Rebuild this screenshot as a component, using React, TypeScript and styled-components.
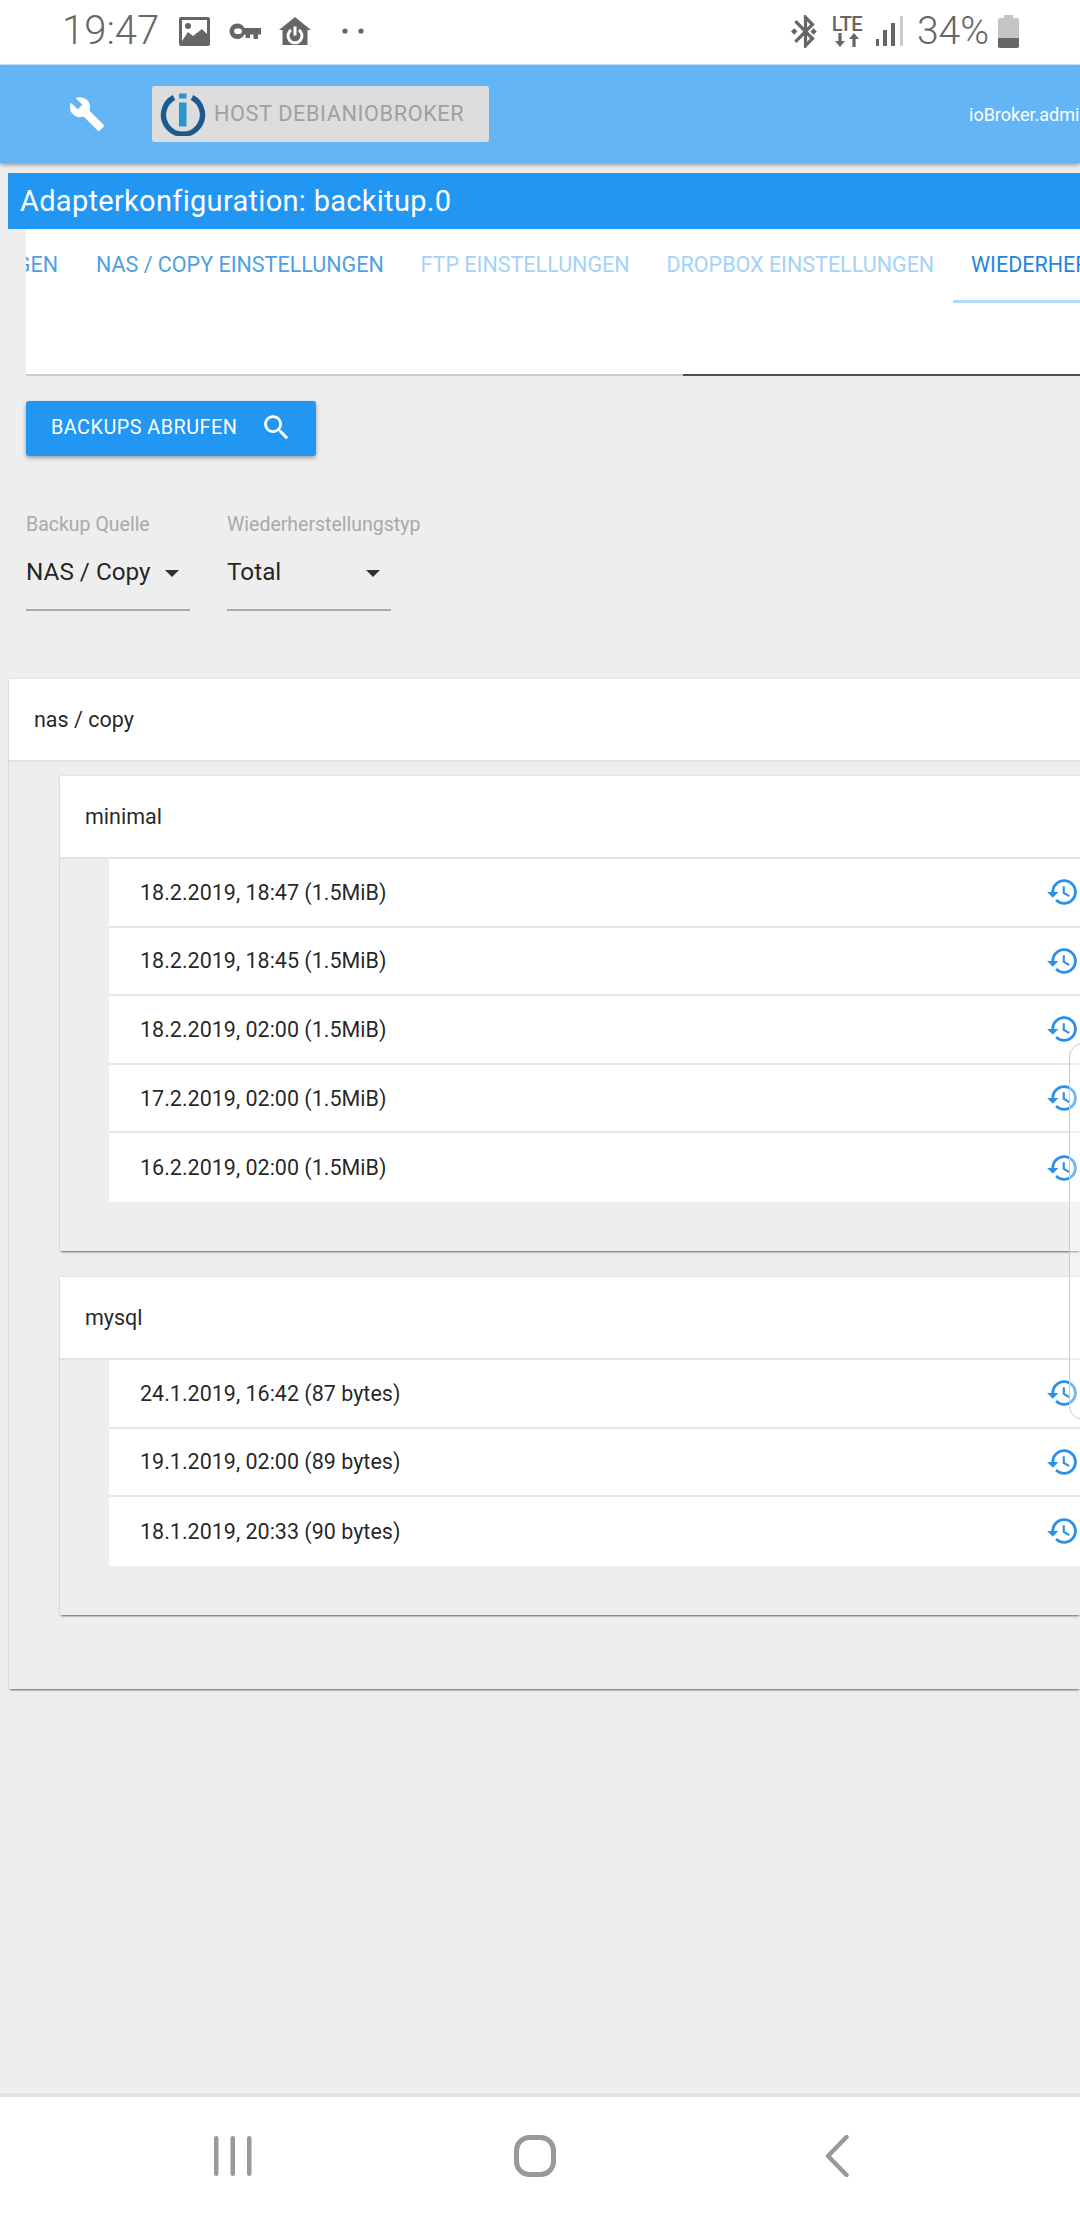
import styled, { createGlobalStyle } from 'styled-components'

const GlobalStyle = createGlobalStyle`
  html, body {
    margin: 0;
    padding: 0;
    background: #eeeeee;
    font-family: Roboto, "Liberation Sans", sans-serif;
  }
  * {
    box-sizing: border-box;
  }
`

const Screen = styled.div`
  position: relative;
  width: 1080px;
  height: 2220px;
  display: flex;
  flex-direction: column;
  overflow: hidden;
  background: #eeeeee;
`

/* status bar */
const StatusBar = styled.div`
  height: 65px;
  flex: none;
  display: flex;
  align-items: center;
  justify-content: space-between;
  padding: 0 61px 2px 62px;
  background: #fff;
  border-bottom: 1px solid #cfe6fb;
  color: #666;
`

const StatusGroup = styled.div`
  display: flex;
  align-items: center;
`

const StatusText = styled.span<{ $left?: number; $size: number }>`
  font-size: ${(p) => p.$size}px;
  font-weight: 300;
  line-height: 44px;
  margin-left: ${(p) => p.$left ?? 0}px;
`

const StatusIcon = styled.svg<{ $left: number }>`
  display: block;
  flex: none;
  margin-left: ${(p) => p.$left}px;
`

const NetworkStack = styled.div`
  width: 30px;
  margin-left: 12px;
  display: flex;
  flex-direction: column;
  align-items: center;
`

const NetworkLabel = styled.span`
  font-size: 20px;
  line-height: 17px;
  font-weight: 500;
  letter-spacing: -0.6px;
`

/* app header */
const Header = styled.header`
  height: 98px;
  flex: none;
  display: flex;
  align-items: center;
  padding-left: 70px;
  background: #64b5f6;
  box-shadow: 0 2px 4px rgba(0, 0, 0, 0.35);
  position: relative;
`

const HostChip = styled.div`
  width: 337px;
  height: 56px;
  flex: none;
  margin-left: 48px;
  padding: 0 0 1px 8px;
  display: flex;
  align-items: center;
  gap: 8px;
  background: #dddddd;
  border-radius: 3px;
  color: #a0a0a0;
  font-size: 21.7px;
  letter-spacing: 0.6px;
  white-space: nowrap;
`

const HeaderLink = styled.span`
  margin-left: 480px;
  flex: none;
  color: #fff;
  font-size: 18px;
  white-space: nowrap;
`

/* adapter config */
const Content = styled.main`
  flex: 1;
  min-height: 0;
`

const TitleBar = styled.div`
  height: 56px;
  margin: 10px 0 0 8px;
  padding-left: 12px;
  display: flex;
  align-items: center;
  background: #2196f3;
  color: #fff;
  font-size: 29px;
  letter-spacing: 0.3px;
  white-space: nowrap;
`

const TabPanel = styled.div`
  height: 147px;
  margin-left: 26px;
  background: #fff;
  overflow: hidden;
  display: flex;
  flex-direction: column;
`

const TabRow = styled.div`
  display: flex;
  height: 74px;
  flex: none;
`

const Tab = styled.div<{ $tone: 'normal' | 'faded' | 'active' }>`
  flex: none;
  height: 74px;
  padding: 24px 18.4px 0;
  font-size: 21.5px;
  line-height: 24px;
  white-space: nowrap;
  color: ${(p) => (p.$tone === 'faded' ? '#a5d2f7' : p.$tone === 'active' ? '#1f86de' : '#4fa0e2')};
  border-bottom: 3px solid ${(p) => (p.$tone === 'active' ? '#b3dafa' : 'transparent')};
`

const CutTab = styled(Tab)`
  width: 32px;
  padding-left: 0;
  padding-right: 0;
  margin-right: 19.6px;
  direction: rtl;
  overflow: hidden;
`

const TabRule = styled.div`
  margin-top: auto;
  height: 2px;
  display: flex;
  flex: none;
  background: #505050;
`

const TabRuleLight = styled.div`
  width: 657px;
  background: #cccccc;
`

const FetchButton = styled.button`
  width: 290px;
  height: 55px;
  margin: 25px 0 0 26px;
  padding: 0 0 2px 25px;
  display: flex;
  align-items: center;
  border: 0;
  border-radius: 3px;
  background: #2196f3;
  color: #fff;
  font-family: inherit;
  font-size: 19.8px;
  letter-spacing: 0.5px;
  box-shadow: 0 2px 4px rgba(0, 0, 0, 0.35);
  white-space: nowrap;
`

const ButtonIcon = styled.svg`
  flex: none;
  margin-left: 23px;
`

const Filters = styled.div`
  display: flex;
  gap: 37px;
  margin: 57px 0 0 26px;
`

const Filter = styled.div`
  width: 164px;
`

const FilterLabel = styled.div`
  height: 24px;
  line-height: 24px;
  font-size: 19.5px;
  color: #a9a9a9;
  white-space: nowrap;
`

const FilterValue = styled.div`
  height: 74px;
  padding: 18px 11px 0 0;
  display: flex;
  justify-content: space-between;
  font-size: 24.3px;
  line-height: 34px;
  color: rgba(0, 0, 0, 0.87);
  border-bottom: 2px solid #ababab;
`

const Caret = styled.span`
  width: 0;
  height: 0;
  margin-top: 15px;
  border-left: 7.5px solid transparent;
  border-right: 7.5px solid transparent;
  border-top: 7.5px solid rgba(0, 0, 0, 0.8);
`

/* backup tree */
const Panel = styled.section<{ $nested?: boolean }>`
  margin: ${(p) => (p.$nested ? '0 0 26px 51px' : '68px 0 0 9px')};
  box-shadow: 0 2px 2px -1px rgba(0, 0, 0, 0.55), 0 0 2px rgba(0, 0, 0, 0.14);
`

const PanelHead = styled.div`
  height: 83px;
  padding-left: 25px;
  display: flex;
  align-items: center;
  background: #fff;
  border-bottom: 2px solid #e3e3e3;
  font-size: 21.5px;
  color: rgba(0, 0, 0, 0.87);
`

const PanelBody = styled.div`
  padding-top: 14px;
  padding-bottom: 48px;
`

const RowList = styled.div`
  margin-left: 49px;
  padding-bottom: 49px;
`

const Row = styled.div`
  height: 68.6px;
  padding: 0 1.5px 0 31px;
  display: flex;
  align-items: center;
  justify-content: space-between;
  background: #fff;
  border-bottom: 2px solid #e6e6e6;
  font-size: 21.5px;
  color: rgba(0, 0, 0, 0.87);

  &:last-child {
    border-bottom: 0;
  }
`

const RestoreIcon = styled.svg`
  flex: none;
  fill: #2b90e8;
`

/* android nav bar */
const NavBar = styled.nav`
  height: 127px;
  flex: none;
  display: grid;
  grid-template-columns: repeat(3, 302px);
  align-items: center;
  justify-items: center;
  padding: 0 0 5px 82px;
  background: #fff;
  border-top: 4px solid #e2e2e2;
`

const EdgeHandle = styled.div`
  position: absolute;
  left: 1069px;
  top: 1043px;
  width: 20px;
  height: 377px;
  border: 1.5px solid #cbcbcb;
  border-radius: 14px 0 0 14px;
  background: rgba(255, 255, 255, 0.35);
`

const HISTORY_PATH =
  'M13 3c-4.97 0-9 4.03-9 9H1l3.89 3.89.07.14L9 12H6c0-3.87 3.13-7 7-7s7 3.13 7 7-3.13 7-7 7c-1.93 0-3.68-.79-4.94-2.06l-1.42 1.42C8.27 19.99 10.51 21 13 21c4.97 0 9-4.03 9-9s-4.03-9-9-9zm-1 5v5l4.28 2.54.72-1.21-3.5-2.08V8H12z'

const groups = [
  {
    name: 'minimal',
    rows: [
      '18.2.2019, 18:47 (1.5MiB)',
      '18.2.2019, 18:45 (1.5MiB)',
      '18.2.2019, 02:00 (1.5MiB)',
      '17.2.2019, 02:00 (1.5MiB)',
      '16.2.2019, 02:00 (1.5MiB)',
    ],
  },
  {
    name: 'mysql',
    rows: ['24.1.2019, 16:42 (87 bytes)', '19.1.2019, 02:00 (89 bytes)', '18.1.2019, 20:33 (90 bytes)'],
  },
]

const IoBrokerLogo = () => (
  <svg width="46" height="44" viewBox="0 0 46 44" style={{ flex: 'none' }}>
    <path d="M14 5.5A19.5 19.5 0 1 0 32 5.5" fill="none" stroke="#1b5a8e" strokeWidth="5.4" />
    <rect x="19" y="1.5" width="7.5" height="5" fill="#2a95cf" />
    <rect x="19" y="10.5" width="7.5" height="24" fill="#2a95cf" />
  </svg>
)

export default function App() {
  return (
    <Screen>
      <GlobalStyle />
      <StatusBar>
        <StatusGroup>
          <StatusText $size={40}>19:47</StatusText>
          <StatusIcon $left={20} width="31" height="29" viewBox="0 0 31 29">
            <rect width="31" height="29" rx="2" fill="#666" />
            <rect x="3" y="3" width="25" height="21" fill="#fff" />
            <circle cx="9" cy="9" r="3" fill="#666" />
            <path d="M3 24l6-9 5 4 9-7 5 5v12H3z" fill="#666" />
          </StatusIcon>
          <StatusIcon $left={19} width="32" height="18" viewBox="0 0 32 18">
            <path
              fillRule="evenodd"
              d="M8.5 1.5c3 0 5.600 1.700 6.800 4.500H32v6.500h-3V17h-4.500v-4.500H21V16h-4.500v-3.500h-1.200c-1.200 2.800-3.800 4.500-6.800 4.500C4 17 .5 13.500 .5 9.250S4 1.500 8.500 1.500zM8 6.500C6.300 6.500 5 7.700 5 9.250S6.300 12 8 12h2c1.700 0 3-1.200 3-2.750S11.700 6.500 10 6.500z"
              fill="#666"
            />
          </StatusIcon>
          <StatusIcon $left={18} width="32" height="28" viewBox="0 0 32 28">
            <path d="M16 0l16 13h-3.500v15h-25V13H0z" fill="#666" />
            <path d="M12 13a7 7 0 1 0 8 0" fill="none" stroke="#fff" strokeWidth="3" />
            <path d="M16 9.500v9" fill="none" stroke="#fff" strokeWidth="3" />
          </StatusIcon>
          <StatusIcon $left={31} width="22" height="6" viewBox="0 0 22 6">
            <circle cx="3" cy="3" r="2.6" fill="#666" />
            <circle cx="19" cy="3" r="2.6" fill="#666" />
          </StatusIcon>
        </StatusGroup>
        <StatusGroup>
          <StatusIcon $left={0} width="29" height="33" viewBox="3 2 18 20" preserveAspectRatio="none" fill="#666">
            <path d="M7 12l-2-2-2 2 2 2 2-2zm10.71-4.29L12 2h-1v7.59L6.41 5 5 6.41 10.59 12 5 17.59 6.41 19 11 14.41V22h1l5.71-5.71-4.3-4.29 4.3-4.29zM13 5.83l1.88 1.88L13 9.59V5.83zm1.88 10.46L13 18.17v-3.76l1.88 1.88zM17 10l-2 2 2 2 2-2-2-2z" />
          </StatusIcon>
          <NetworkStack>
            <NetworkLabel>LTE</NetworkLabel>
            <svg width="24" height="14" viewBox="0 0 24 14" fill="#666">
              <path d="M5 14L0 8h3.400V0h3.200v8H10zM19 0l5 6h-3.400v8h-3.200V6H14z" />
            </svg>
          </NetworkStack>
          <StatusIcon $left={14} width="27" height="30" viewBox="0 0 27 30">
            <rect x="0" y="23" width="3" height="7" fill="#666" />
            <rect x="7" y="14" width="4" height="16" fill="#666" />
            <rect x="15" y="7" width="4" height="23" fill="#666" />
            <rect x="24" y="0" width="3" height="30" fill="#cccccc" />
          </StatusIcon>
          <StatusText $left={14} $size={39}>34%</StatusText>
          <StatusIcon $left={9} width="21" height="33" viewBox="0 0 21 33">
            <path d="M6 0h9v3h4a2 2 0 0 1 2 2v26a2 2 0 0 1-2 2H2a2 2 0 0 1-2-2V5a2 2 0 0 1 2-2h4z" fill="#c4c4c4" />
            <path d="M0 23h21v8a2 2 0 0 1-2 2H2a2 2 0 0 1-2-2z" fill="#666" />
          </StatusIcon>
        </StatusGroup>
      </StatusBar>

      <Header>
        <svg width="34" height="34" viewBox="1 1 22 22" fill="#fff" style={{ flex: 'none' }}>
          <path d="M22.7 19l-9.1-9.1c.9-2.3.4-5-1.500-6.900-2-2-5-2.400-7.400-1.300L9 6 6 9 1.600 4.700C.4 7.100.9 10.100 2.900 12.100c1.900 1.900 4.600 2.400 6.900 1.500l9.100 9.100c.4.4 1 .4 1.400 0l2.300-2.300c.5-.4.5-1.100.1-1.400z" />
        </svg>
        <HostChip>
          <IoBrokerLogo />
          HOST DEBIANIOBROKER
        </HostChip>
        <HeaderLink>ioBroker.admin</HeaderLink>
      </Header>

      <Content>
        <TitleBar>Adapterkonfiguration: backitup.0</TitleBar>
        <TabPanel>
          <TabRow>
            <CutTab $tone="normal">GEN</CutTab>
            <Tab $tone="normal">NAS / COPY EINSTELLUNGEN</Tab>
            <Tab $tone="faded">FTP EINSTELLUNGEN</Tab>
            <Tab $tone="faded">DROPBOX EINSTELLUNGEN</Tab>
            <Tab $tone="active">WIEDERHERSTELLEN</Tab>
          </TabRow>
          <TabRule>
            <TabRuleLight />
          </TabRule>
        </TabPanel>

        <FetchButton>
          BACKUPS ABRUFEN
          <ButtonIcon width="33" height="33" viewBox="0 0 24 24" fill="#fff">
            <path d="M15.5 14h-.79l-.28-.27C15.41 12.59 16 11.11 16 9.5 16 5.91 13.09 3 9.5 3S3 5.91 3 9.5 5.91 16 9.5 16c1.61 0 3.09-.59 4.23-1.57l.27.28v.79l5 4.99L20.49 19l-4.99-5zm-6 0C7.01 14 5 11.99 5 9.5S7.01 5 9.5 5 14 7.01 14 9.5 11.99 14 9.5 14z" />
          </ButtonIcon>
        </FetchButton>

        <Filters>
          <Filter>
            <FilterLabel>Backup Quelle</FilterLabel>
            <FilterValue>
              NAS / Copy
              <Caret />
            </FilterValue>
          </Filter>
          <Filter>
            <FilterLabel>Wiederherstellungstyp</FilterLabel>
            <FilterValue>
              Total
              <Caret />
            </FilterValue>
          </Filter>
        </Filters>

        <Panel>
          <PanelHead>nas / copy</PanelHead>
          <PanelBody>
            {groups.map((group) => (
              <Panel $nested key={group.name}>
                <PanelHead>{group.name}</PanelHead>
                <RowList>
                  {group.rows.map((row) => (
                    <Row key={row}>
                      {row}
                      <RestoreIcon width="34" height="34" viewBox="0 0 23 24">
                        <path d={HISTORY_PATH} />
                      </RestoreIcon>
                    </Row>
                  ))}
                </RowList>
              </Panel>
            ))}
          </PanelBody>
        </Panel>
      </Content>

      <NavBar>
        <svg width="38" height="42" viewBox="0 0 38 42" fill="#999">
          <rect x="0" y="1" width="4.5" height="40" rx="2.2" />
          <rect x="16.5" y="1" width="4.5" height="40" rx="2.2" />
          <rect x="33" y="1" width="4.5" height="40" rx="2.2" />
        </svg>
        <svg width="42" height="42" viewBox="0 0 42 42">
          <rect x="2.5" y="2.5" width="37" height="37" rx="13" fill="none" stroke="#999" strokeWidth="5" />
        </svg>
        <svg width="24" height="42" viewBox="0 0 24 42">
          <path d="M21.5 2L3 21l18.5 19" fill="none" stroke="#999" strokeWidth="4.5" strokeLinecap="round" strokeLinejoin="round" />
        </svg>
      </NavBar>

      <EdgeHandle />
    </Screen>
  )
}
